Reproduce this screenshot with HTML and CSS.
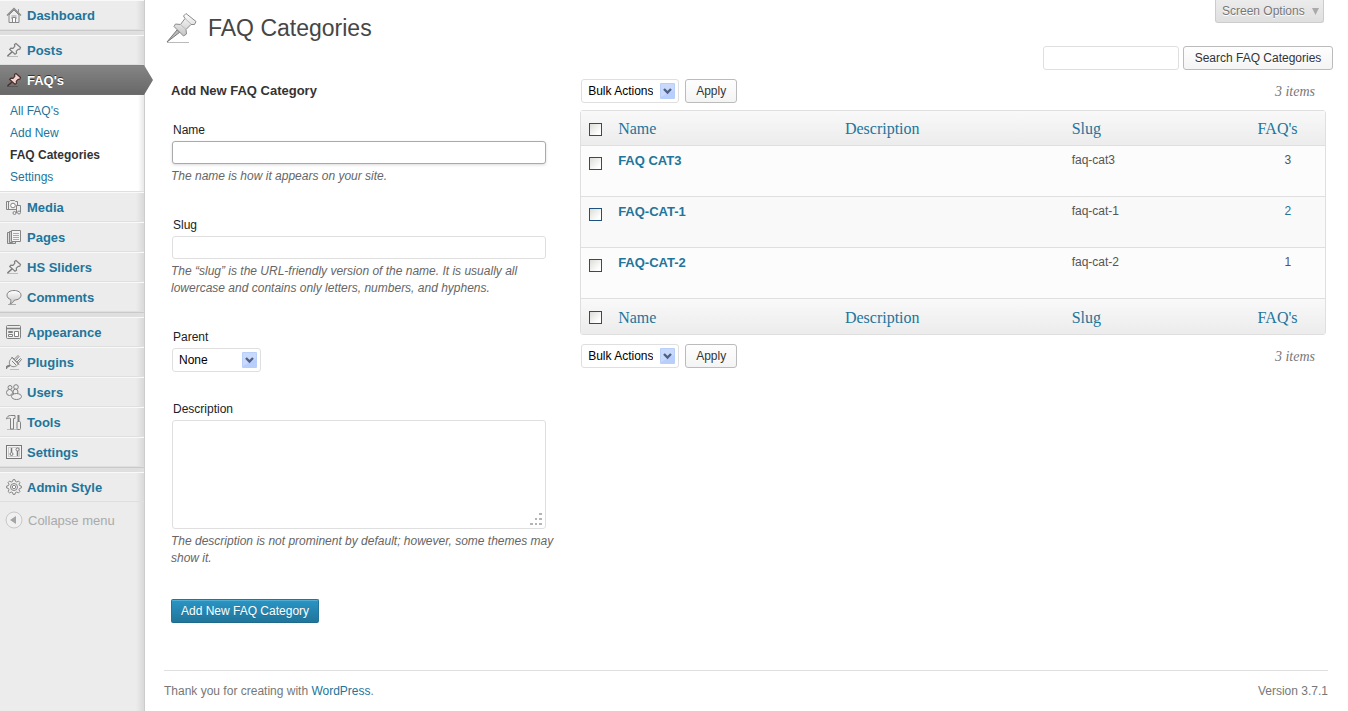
FILE: index.html
```html
<!DOCTYPE html>
<html lang="en">
<head>
<meta charset="utf-8">
<title>FAQ Categories</title>
<link rel="stylesheet" href="styles.css">
</head>
<body>
<svg class="sprite" aria-hidden="true">
  <defs>
    <linearGradient id="shine" x1="0" y1="0" x2="0" y2="1"><stop offset="0" stop-color="#fff"/><stop offset="1" stop-color="#c4c4c4"/></linearGradient>
    <symbol id="pin" viewBox="0 0 16 16">
      <path d="M1 14.500h11" stroke="#000" stroke-opacity=".2"/>
      <path d="M6.500 9.500 1.500 14" stroke="var(--pinline, #777)" stroke-width="1.600"/>
      <path d="M8.500 2.500 10 1.500l4.500 4-.7 1.700-1.600.1-1.900 1.900.2 2.100-1.500 1L3.700 7.500l1.200-1.400 2.100.2 1.800-2z" fill="var(--pin, #eee)" stroke="var(--pinline, #808080)" stroke-width="1.200"/>
    </symbol>
    <symbol id="chev" viewBox="0 0 15 16">
      <rect width="15" height="16" rx="1" fill="#b9cffb"/><path d="M1 1h13v6L1 14z" fill="#d3dffd" opacity=".6"/>
      <path d="m4 6 3.500 3.500L11 6" fill="none" stroke="#4d6185" stroke-width="2.400"/>
    </symbol>
  </defs>
</svg>
<div class="layout">
  <nav class="menu" aria-label="Main menu">
    <ul class="menu-group">
      <li><a class="item" href="#"><svg class="icon" viewBox="0 0 16 16"><path d="M3 8v7.500h10V8L8 3z" fill="#eee" stroke="#888"/><path d="M1 8.500 8 1.500l7 7" fill="none" stroke="#888" stroke-width="1.400"/><path d="M12.500 2v3M5.500 9h5M5 11h6" stroke="#999"/><path d="M6.500 15v-4.500h3V15" fill="#fff" stroke="#888"/></svg>Dashboard</a></li>
    </ul>
    <ul class="menu-group">
      <li><a class="item" href="#"><svg class="icon"><use href="#pin"/></svg>Posts</a></li>
      <li>
        <a class="item item-current" href="#"><svg class="icon icon-red"><use href="#pin"/></svg>FAQ's<svg class="pointer" viewBox="0 0 9 30"><defs><linearGradient id="tip" x1="0" y1="0" x2="0" y2="1"><stop offset="0" stop-color="#848484"/><stop offset="1" stop-color="#686868"/></linearGradient></defs><path d="M0 0 9 15 0 30z" fill="url(#tip)"/></svg></a>
        <ul class="submenu">
          <li><a href="#">All FAQ's</a></li>
          <li><a href="#">Add New</a></li>
          <li><a class="selected" href="#">FAQ Categories</a></li>
          <li><a href="#">Settings</a></li>
        </ul>
      </li>
      <li><a class="item" href="#"><svg class="icon" viewBox="0 0 16 16" fill="none" stroke="#858585"><path d="M.5 2.500h3l1-1h4l1 1h2v8H.5z" fill="#eee"/><path d="M2.500 3v7"/><circle cx="7" cy="6.500" r="2.300" fill="#fff"/><path d="M10.500 14V6.500h4V13" fill="#eee"/><circle cx="8.500" cy="14" r="1.500"/><circle cx="13" cy="13.500" r="1.500"/></svg>Media</a></li>
      <li><a class="item" href="#"><svg class="icon" viewBox="0 0 16 16" stroke="#858585"><path d="M1.500 3.500h8v11h-8z" fill="#ddd"/><path d="M3.500 2.500h3v11h-3z" fill="#ccc"/><path d="M5.500 1.500h9v11h-9z" fill="#f4f4f4"/><path d="M7 4.500h6M7 6.500h6M7 8.500h6M7 10.500h6" stroke="#aaa"/></svg>Pages</a></li>
      <li><a class="item" href="#"><svg class="icon"><use href="#pin"/></svg>HS Sliders</a></li>
      <li><a class="item" href="#"><svg class="icon" viewBox="0 0 16 16"><path d="M2 15.500h8" stroke="#aaa"/><path d="M8 1.500c4 0 7 1.800 7 4.700s-3 4.800-6.500 4.800C7.500 13 6 14.500 4 15c1-1.500 1-3 .6-4.500C2.500 9.700 1 8.500 1 6.200c0-2.900 3-4.700 7-4.700z" fill="url(#shine)" stroke="#808080"/></svg>Comments</a></li>
    </ul>
    <ul class="menu-group">
      <li><a class="item" href="#"><svg class="icon" viewBox="0 0 16 16" fill="none" stroke="#808080"><rect x=".5" y="1.500" width="14" height="13" rx="1" fill="#eee"/><path d="M1 4.500h13" stroke-width="1.500"/><path d="M2.500 7.500h4v1h-4zM2.500 10.500h4v2h-4zM8.500 7.500h4v5h-4z" fill="#fff"/></svg>Appearance</a></li>
      <li><a class="item" href="#"><svg class="icon" viewBox="0 0 16 16" fill="none" stroke="#808080"><path d="M4 15.500h9" stroke="#bbb"/><path d="M0 15c0-2 1.500-3 4-3.500" stroke-width="2"/><path d="M6.500 3.500 12.500 10c-2.500 3-6 3.500-8 1.500S3 6 6.500 3.500z" fill="#eee"/><path d="M5.500 3 13 10.500M8.500 5 12 1.500l1 1L9.500 6.500M11 8l3.500-3.500 1 1L12 9.500M6 7l4 4"/></svg>Plugins</a></li>
      <li><a class="item" href="#"><svg class="icon" viewBox="0 0 16 16" fill="#eee" stroke="#808080"><circle cx="4" cy="3.500" r="2"/><ellipse cx="3.500" cy="8.500" rx="3" ry="3"/><circle cx="10" cy="3" r="2.300"/><ellipse cx="9.500" cy="8" rx="2.500" ry="2.800"/><ellipse cx="10.500" cy="12.500" rx="5" ry="3"/></svg>Users</a></li>
      <li><a class="item" href="#"><svg class="icon" viewBox="0 0 16 16" fill="#eee" stroke="#808080"><path d="M1 15.500h13" stroke="#bbb"/><path d="M.5 5c.5-2.500 2-3.500 4-3.500h4.500v3H7.500V15h-3V4.500C3 4 2 4 .5 5z"/><path d="M12.500 1v6" stroke-width="2"/><rect x="11" y="7.500" width="3.500" height="8" rx="1"/></svg>Tools</a></li>
      <li><a class="item" href="#"><svg class="icon" viewBox="0 0 16 16" fill="none" stroke="#777"><rect x=".5" y="1.500" width="15" height="13" fill="#f4f4f4"/><path d="M2.500 3.500h11v9h-11z" stroke="#ccc"/><path d="M5.500 4v4M11.500 7v5" stroke-width="1.500"/><circle cx="5.500" cy="10" r="1.500"/><circle cx="11.500" cy="5.500" r="1.500"/></svg>Settings</a></li>
    </ul>
    <ul class="menu-group">
      <li><a class="item" href="#"><svg class="icon" viewBox="0 0 16 16" fill="#eee" stroke="#858585"><path d="M6.500 2.500 7 .7h2l.5 1.800 1.300.5 1.700-.9 1.400 1.400-.9 1.700.5 1.300 1.800.5v2l-1.800.5-.5 1.300.9 1.700-1.400 1.400-1.700-.9-1.300.5-.5 1.800H7l-.5-1.800-1.300-.5-1.700.9-1.400-1.400.9-1.700-.5-1.300L.7 9V7l1.800-.5L3 5.200l-.9-1.700 1.400-1.400 1.700.9z"/><circle cx="8" cy="8" r="3.500"/><circle cx="8" cy="8" r="1.700" fill="#fff"/></svg>Admin Style</a></li>
    </ul>
    <button class="collapse" type="button"><svg class="collapse-icon" viewBox="0 0 18 18"><circle cx="9" cy="9" r="8" fill="#f0f0f0" stroke="#c8c8c8"/><path d="M5 9l6-4v8z" fill="#a5a5a5"/></svg>Collapse menu</button>
  </nav>

  <div class="page">
    <main class="wrap">
      <header class="top">
        <svg class="title-icon" viewBox="0 0 32 32"><path d="M1 30.500h22" stroke="#bbb"/><path d="m14 20-3-2L1 30z" fill="#bbb" stroke="#777"/><path d="M17.500 4 20 1.500l10 8-1.500 3-3.500 0-5 5 .5 4.500-3 2L8 14.500 9.500 12l5 .5 4.500-6z" fill="url(#shine)" stroke="#8a8a8a"/><path d="m19 6.500 6 5.500M14.500 12.500l5.500 5" fill="none" stroke="#bbb"/></svg>
        <h1>FAQ Categories</h1>
        <button class="screen-options" type="button">Screen Options <svg class="tri" viewBox="0 0 7 7"><path d="M0 0h7L3.500 7z" fill="#aaa"/></svg></button>
      </header>
      <form class="search">
        <input type="search" aria-label="Search FAQ Categories">
        <button class="button" type="button">Search FAQ Categories</button>
      </form>
      <div class="columns">
        <form class="add">
          <h2>Add New FAQ Category</h2>
          <div class="field">
            <label for="name">Name</label>
            <input class="focused" id="name" type="text">
            <p>The name is how it appears on your site.</p>
          </div>
          <div class="field">
            <label for="slug">Slug</label>
            <input id="slug" type="text">
            <p>The “slug” is the URL-friendly version of the name. It is usually all lowercase and contains only letters, numbers, and hyphens.</p>
          </div>
          <div class="field field-parent">
            <label for="parent">Parent</label>
            <span class="select"><select id="parent"><option>None</option></select><svg class="chev"><use href="#chev"/></svg></span>
          </div>
          <div class="field">
            <label for="description">Description</label>
            <span class="area"><textarea id="description"></textarea><svg class="grip" viewBox="0 0 12 12"><path d="M9 0h3v2H9zM5 5h2v2H5zM9 5h3v2H9zM0 10h3v2H0zM5 10h2v2H5zM9 10h3v2H9z" fill="#b5b5b5"/></svg></span>
            <p>The description is not prominent by default; however, some themes may show it.</p>
          </div>
          <button class="button primary" type="button">Add New FAQ Category</button>
        </form>

        <section class="list">
          <div class="actions">
            <span class="select"><select aria-label="Bulk actions"><option>Bulk Actions</option></select><svg class="chev"><use href="#chev"/></svg></span>
            <button class="button" type="button">Apply</button>
            <span class="count">3 items</span>
          </div>
          <table>
            <colgroup><col class="c-check"><col><col><col class="c-slug"><col class="c-posts"></colgroup>
            <thead><tr><th><input type="checkbox" aria-label="Select all"></th><th><a href="#">Name</a></th><th><a href="#">Description</a></th><th><a href="#">Slug</a></th><th><a href="#">FAQ's</a></th></tr></thead>
            <tbody>
              <tr><td><input type="checkbox" aria-label="Select FAQ CAT3"></td><td><a class="row-title" href="#">FAQ CAT3</a></td><td></td><td>faq-cat3</td><td class="num">3</td></tr>
              <tr><td><input type="checkbox" aria-label="Select FAQ-CAT-1"></td><td><a class="row-title" href="#">FAQ-CAT-1</a></td><td></td><td>faq-cat-1</td><td class="num"><a href="#">2</a></td></tr>
              <tr><td><input type="checkbox" aria-label="Select FAQ-CAT-2"></td><td><a class="row-title" href="#">FAQ-CAT-2</a></td><td></td><td>faq-cat-2</td><td class="num">1</td></tr>
            </tbody>
            <tfoot><tr><th><input type="checkbox" aria-label="Select all"></th><th><a href="#">Name</a></th><th><a href="#">Description</a></th><th><a href="#">Slug</a></th><th><a href="#">FAQ's</a></th></tr></tfoot>
          </table>
          <div class="actions">
            <span class="select"><select aria-label="Bulk actions, bottom"><option>Bulk Actions</option></select><svg class="chev"><use href="#chev"/></svg></span>
            <button class="button" type="button">Apply</button>
            <span class="count">3 items</span>
          </div>
        </section>
      </div>
    </main>
    <footer class="footer"><span>Thank you for creating with <a href="#">WordPress</a>.</span><span>Version 3.7.1</span></footer>
  </div>
</div>
</body>
</html>
```
FILE: styles.css
```css
* { box-sizing: border-box; }
body { margin: 0; background: #fff; color: #333; font: 12px/17px "Liberation Sans", Arial, sans-serif; }
ul { margin: 0; padding: 0; list-style: none; }
h1, h2, p { margin: 0; }
a { color: #21759b; text-decoration: none; }
button, input, select, textarea { font: inherit; margin: 0; }
.sprite { position: absolute; width: 0; height: 0; }
svg { flex: none; }

.layout { display: flex; min-height: 100vh; }

.menu { flex: none; width: 145px; background: linear-gradient(to left, #d9d9d9, #ececec 8px); border-right: 1px solid #ccc; }
.menu-group + .menu-group { border-top: 1px solid #c9c9c9; background: linear-gradient(#dfdfdf, #dfdfdf) no-repeat 0 0 / 100% 4px; padding-top: 4px; }
.item { position: relative; display: flex; align-items: center; gap: 5px; height: 30px; padding-left: 6px; border-top: 1px solid #f9f9f9; border-bottom: 1px solid #dfdfdf; font-size: 13px; font-weight: bold; }
.icon { width: 16px; height: 16px; }
.icon-red { --pin: #f3d5d0; --pinline: #4a2f2c; }
.item-current { background: linear-gradient(#848484, #686868); border-color: #808080 #808080 #6d6d6d; color: #fff; text-shadow: 0 -1px 0 #333; }
.pointer { position: absolute; left: 100%; top: -1px; width: 9px; height: 30px; }
.submenu { padding: 5px 0 3px; border-bottom: 1px solid #dfdfdf; background: linear-gradient(to left, #e8e8e8, #fff 6px); }
.submenu a { display: block; padding: 3px 0 2px 10px; }
.submenu .selected { color: #333; font-weight: bold; }
.collapse { display: flex; align-items: center; gap: 5px; height: 36px; padding: 0 0 0 5px; border: 0; background: none; color: #aaa; font-size: 13px; }
.collapse-icon { width: 18px; height: 18px; }

.page { flex: 1; min-width: 0; padding-left: 19px; }
.wrap { margin-right: 15px; min-height: 670px; }
.top { display: flex; align-items: flex-start; height: 46px; padding: 0 9px 0 2px; }
.title-icon { width: 32px; height: 32px; margin: 12px 10px 0 0; }
h1 { flex: 1; padding-top: 14px; font-size: 23px; line-height: 29px; font-weight: normal; color: #464646; }
.screen-options { display: flex; align-items: center; justify-content: space-between; width: 109px; height: 23px; padding: 0 4px 0 6px; border: 1px solid #ccc; border-top: 0; border-radius: 0 0 3px 3px; background: linear-gradient(#ececec, #dfdfdf); color: #777; text-shadow: 0 1px 0 #fff; }
.tri { width: 7px; height: 7px; }

.button { height: 24px; padding: 0 10px; border: 1px solid #bbb; border-radius: 3px; background: linear-gradient(#fefefe, #f4f4f4); color: #333; text-shadow: 0 1px 0 #fff; white-space: nowrap; }
.primary { padding: 0 9px; border-color: #21759b #21759b #1e6a8d; border-radius: 2px; background: linear-gradient(#2a95c5, #21759b); color: #fff; box-shadow: inset 0 1px 0 rgba(120, 200, 230, .5); text-shadow: 0 1px 0 rgba(0, 0, 0, .1); }
input:not([type="checkbox"]), select, textarea { border: 1px solid #dfdfdf; border-radius: 3px; background: #fff; outline: 0; }
.search { display: flex; justify-content: flex-end; gap: 4px; }
.search input { width: 136px; height: 24px; }
.search .button { width: 150px; }

.columns { display: grid; grid-template-columns: 35% 65%; padding-top: 9px; }
.add { padding: 3px 7px 0; }
h2 { margin-bottom: 22px; font-size: 13px; line-height: 18px; }
.field { display: grid; grid-template-columns: 95%; padding: 0 0 32px 1px; }
.field label { margin-bottom: 3px; padding-left: 1px; line-height: 16px; color: #222; }
.field input { width: 100%; height: 23px; }
.field .focused { border-color: #aaa; box-shadow: 0 1px 3px rgba(0, 0, 0, .15); }
.field p { width: 395px; max-width: 106%; margin: 4px 0 0 -1px; color: #666; font-style: italic; }
.field-parent { padding-bottom: 29px; }
.field-parent .select { width: 89px; }
.select, .area { display: inline-grid; align-items: center; }
.select > *, .area > * { grid-area: 1 / 1; }
select { appearance: none; width: 100%; height: 24px; padding: 0 25px 0 6px; color: #000; }
.chev { justify-self: end; width: 15px; height: 16px; margin-right: 4px; pointer-events: none; }
textarea { width: 100%; height: 109px; resize: none; }
.grip { place-self: end; z-index: 1; width: 12px; height: 12px; margin: 0 4px 4px 0; pointer-events: none; }

.list { padding: 0 7px; }
.actions { display: flex; gap: 6px; padding-left: 1px; }
.actions .select { width: 98px; }
.count { margin: 4px 11px 0 auto; color: #777; font: italic 14px/17px "Liberation Serif", Georgia, serif; }
table { width: 100%; margin: 7px 0 9px; table-layout: fixed; border: 1px solid #dfdfdf; border-radius: 3px; border-spacing: 0; background: #f9f9f9; }
.c-check { width: 30px; }
.c-slug { width: 25%; }
.c-posts { width: 10%; }
th { height: 35px; padding: 2px 7px 0; text-align: left; font: 16px/18px "Liberation Serif", Georgia, serif; background: linear-gradient(#f9f9f9, #ececec); }
thead th { border-bottom: 1px solid #dfdfdf; }
tbody td { height: 51px; padding: 6px 7px; border-bottom: 1px solid #dfdfdf; vertical-align: top; color: #555; }
th:first-child, td:first-child { padding-left: 8px; }
tbody tr:nth-child(odd) td { background: #fcfcfc; }
.num { text-align: center; }
.row-title { font-size: 13px; font-weight: bold; }
input[type="checkbox"] { appearance: none; display: block; width: 13px; height: 13px; border: 1px solid #1c5180; background: linear-gradient(135deg, #dcdcd7, #fff 80%); }
td input[type="checkbox"] { margin-top: 5px; }

.footer { display: flex; justify-content: space-between; margin-right: 20px; padding: 12px 0 11px; border-top: 1px solid #dfdfdf; color: #777; }
```
